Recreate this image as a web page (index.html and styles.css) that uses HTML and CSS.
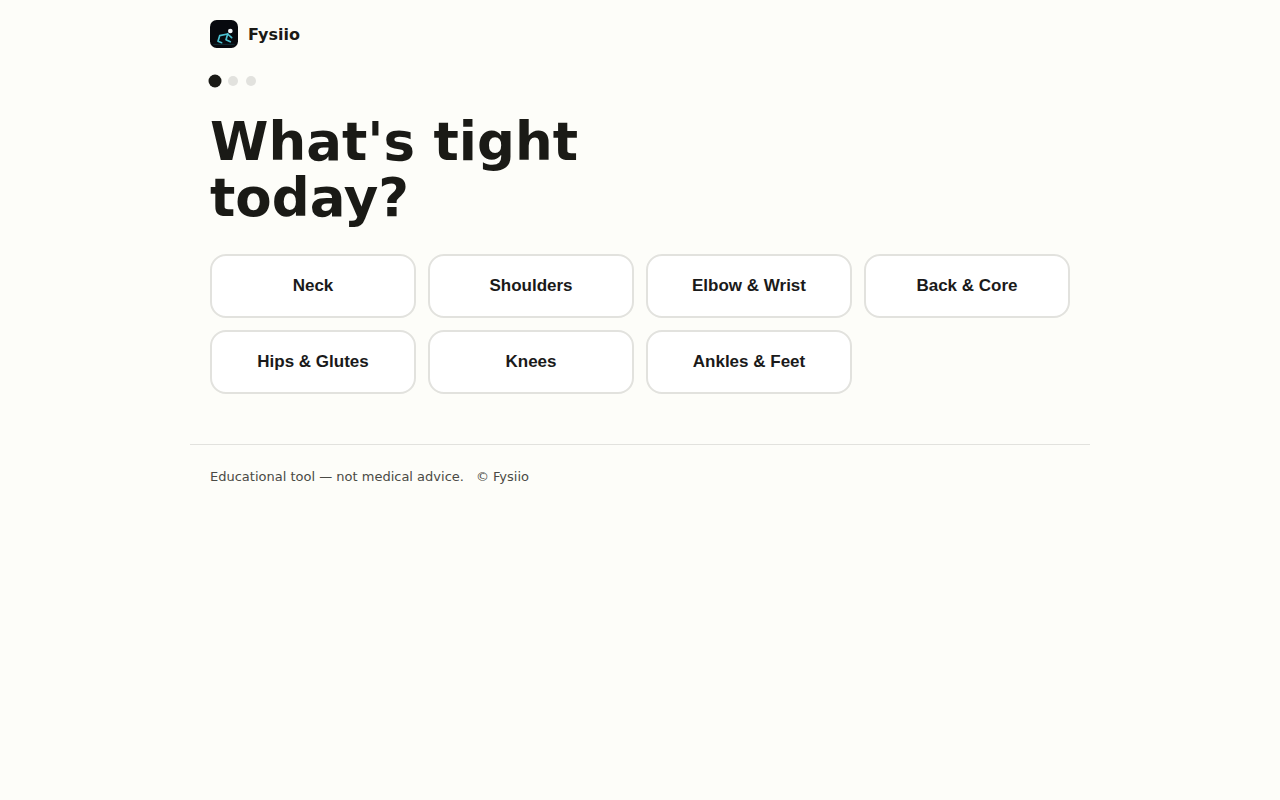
FILE: index.html
```html
<!DOCTYPE html>
<html lang="en">
<head>
    <meta charset="UTF-8">
    <meta name="viewport" content="width=device-width, initial-scale=1.0">
    <title>Fysiio</title>
    <link rel="stylesheet" href="styles.css">
</head>
<body>
    <div class="wrap">
        <header class="header">
            <a class="brand" href="#">
                <svg class="logo" viewBox="0 0 84 84" aria-hidden="true">
                    <rect width="84" height="84" rx="20" fill="#07090e"/>
                    <path d="M10 73H74" stroke="#16434b" stroke-width="2"/>
                    <g fill="none" stroke="#4cc0d0" stroke-width="5" stroke-linecap="round" stroke-linejoin="round">
                        <path d="M53 42L29 47L24 64L35 68"/>
                        <path d="M53 42L65 53"/>
                        <path d="M53 42L48 59L61 65"/>
                    </g>
                    <circle cx="61" cy="33" r="7" fill="#f1f5f9"/>
                </svg>
                <span>Fysiio</span>
            </a>
        </header>
        <main>
            <div class="steps">
                <span class="dot active"></span>
                <span class="dot"></span>
                <span class="dot"></span>
            </div>
            <h1>What's tight today?</h1>
            <div class="grid">
                <button type="button" class="tile">Neck</button>
                <button type="button" class="tile">Shoulders</button>
                <button type="button" class="tile">Elbow &amp; Wrist</button>
                <button type="button" class="tile">Back &amp; Core</button>
                <button type="button" class="tile">Hips &amp; Glutes</button>
                <button type="button" class="tile">Knees</button>
                <button type="button" class="tile">Ankles &amp; Feet</button>
            </div>
        </main>
        <footer class="footer">
            <span>Educational tool — not medical advice.</span>
            <span>© Fysiio</span>
        </footer>
    </div>
</body>
</html>
```
FILE: styles.css
```css
:root {
    --bg: #fdfdf9;
    --ink: #1a1a16;
    --muted: #4a4a45;
    --line: #e2e2de;
}
* {
    box-sizing: border-box;
}
body {
    margin: 0;
    font-family: "DejaVu Sans", sans-serif;
    color: var(--ink);
    background: var(--bg);
}
.wrap {
    max-width: 900px;
    margin: 0 auto;
}
.header {
    padding: 20px 20px 28px;
}
.brand {
    display: inline-flex;
    align-items: center;
    gap: 10px;
    vertical-align: top;
    font-size: 16px;
    font-weight: 700;
    color: inherit;
    text-decoration: none;
}
.logo {
    width: 28px;
    height: 28px;
}
main {
    padding: 0 20px 50px;
}
.steps {
    display: flex;
    gap: 8px;
}
.dot {
    width: 10px;
    height: 10px;
    border-radius: 50%;
    background: var(--line);
}
.dot.active {
    background: var(--ink);
    transform: scale(1.3);
}
h1 {
    max-width: 12ch;
    margin: 28px 0;
    font-size: 53px;
    font-weight: 700;
    line-height: 56px;
}
.grid {
    display: grid;
    grid-template-columns: repeat(auto-fill, minmax(200px, 1fr));
    gap: 12px;
}
.tile {
    min-height: 64px;
    padding: 16px;
    border: 2px solid var(--line);
    border-radius: 16px;
    background: #fff;
    color: #1a1a1a;
    font-family: "Liberation Sans", Arial, sans-serif;
    font-size: 17px;
    font-weight: 700;
    cursor: pointer;
}
.tile:hover {
    border-color: var(--ink);
}
.footer {
    display: flex;
    flex-wrap: wrap;
    gap: 12px;
    padding: 24px 20px;
    border-top: 1px solid var(--line);
    font-size: 13px;
    color: var(--muted);
}
```
